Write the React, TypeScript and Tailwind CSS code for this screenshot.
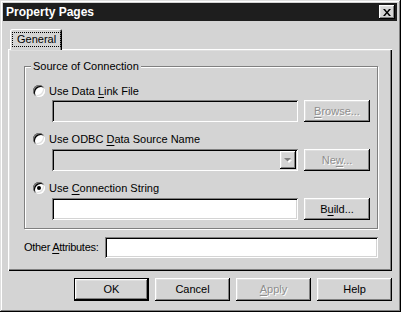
import React from "react";

const raised =
  "shadow-[inset_-1px_-1px_0_#000,inset_1px_1px_0_#fff,inset_-2px_-2px_0_#808080,inset_2px_2px_0_#dfdfdf]";
const sunken =
  "shadow-[inset_1px_1px_0_#808080,inset_-1px_-1px_0_#fff,inset_2px_2px_0_#000,inset_-2px_-2px_0_#d4d4d4]";

function U({ children }: { children: React.ReactNode }) {
  return <span className="underline underline-offset-[2px] decoration-1">{children}</span>;
}

function Radio({ checked, children }: { checked?: boolean; children: React.ReactNode }) {
  return (
    <div className="flex items-center h-[16px] gap-[4px]">
      <div className="w-[12px] h-[12px] rounded-full bg-white flex items-center justify-center shadow-[inset_1px_1px_0_#808080,inset_-1px_-1px_0_#fff,inset_2px_2px_0_#000,inset_-2px_-2px_0_#dfdfdf]">
        {checked && <div className="w-[4px] h-[4px] rounded-full bg-black" />}
      </div>
      <span>{children}</span>
    </div>
  );
}

function Button({
  children,
  disabled,
  isDefault,
  className = "",
}: {
  children: React.ReactNode;
  disabled?: boolean;
  isDefault?: boolean;
  className?: string;
}) {
  return (
    <div
      className={`${className} flex items-center justify-center bg-[#d4d4d4] ${
        isDefault ? "border border-black" : ""
      } ${raised} ${disabled ? "text-[#8e8e8e] [text-shadow:1px_1px_0_#fff]" : "text-black"}`}
    >
      {children}
    </div>
  );
}

export default function App() {
  return (
    <div className="w-[401px] h-[312px] overflow-hidden bg-[#d4d4d4] text-black text-[11px] leading-[13px] font-['Liberation_Sans',Arial,sans-serif] shadow-[inset_-1px_-1px_0_#000,inset_1px_1px_0_#dfdfdf,inset_-2px_-2px_0_#808080,inset_2px_2px_0_#fff]">
      {/* title bar */}
      <div className="ml-[3px] mr-[4px] pt-[3px]">
        <div className="h-[18px] bg-[#1e1e1e] flex items-center justify-between pl-[3px] pr-[2px]">
          <span className="text-white font-bold text-[12px]">Property Pages</span>
          <div className={`w-[16px] h-[14px] bg-[#d4d4d4] ${raised} flex items-center justify-center`}>
            <svg width="8" height="7" viewBox="0 0 8 7">
              <path d="M0 0h2l2 2.5L6 0h2L5 3.5 8 7H6L4 4.5 2 7H0l3-3.5z" fill="#000" />
            </svg>
          </div>
        </div>
      </div>

      <div className="pl-[8px] pt-[8px]">
        {/* tab */}
        <div className="relative z-10 ml-[2px] w-[52px] h-[21px] -mb-[1px] bg-[#d4d4d4] rounded-t-[2px] shadow-[inset_1px_1px_0_#fff,inset_-1px_0_0_#000,inset_-2px_0_0_#808080] flex items-start pt-[3px] pl-[2px]">
          <span className="border border-dotted border-black px-[4px] leading-[13px]">General</span>
        </div>

        {/* panel */}
        <div className="w-[384px] h-[222px] pt-[11px] pl-[16px] pr-[14px] shadow-[inset_1px_1px_0_#fff,inset_-1px_-1px_0_#000,inset_-2px_-2px_0_#808080,inset_2px_2px_0_#dfdfdf]">
          <fieldset className="border border-[#808080] shadow-[inset_1px_1px_0_#fff,1px_1px_0_#fff] pl-[8px] pr-[7px] pb-[8px]">
            <legend className="-ml-[2px] px-[2px] bg-[#d4d4d4] leading-[13px]">Source of Connection</legend>

            <div className="mt-[10px]">
              <Radio>
                Use Data <U>L</U>ink File
              </Radio>
            </div>
            <div className="flex gap-[6px] pl-[19px] mt-[1px]">
              <div className={`w-[246px] h-[22px] bg-[#d4d4d4] ${sunken}`} />
              <Button disabled className="w-[66px] h-[22px]">
                <span>
                  <U>B</U>rowse...
                </span>
              </Button>
            </div>

            <div className="mt-[9px]">
              <Radio>
                Use ODBC <U>D</U>ata Source Name
              </Radio>
            </div>
            <div className="flex gap-[6px] pl-[19px] mt-[2px]">
              <div className={`w-[246px] h-[22px] bg-[#d4d4d4] ${sunken} flex justify-end p-[2px]`}>
                <div className={`w-[16px] h-[18px] bg-[#d4d4d4] ${raised} flex items-center justify-center`}>
                  <svg width="8" height="5" viewBox="0 0 8 5">
                    <path d="M1 1h6L4 4z" fill="#fff" transform="translate(1 1)" />
                    <path d="M0 0h7L3.5 3.5z" fill="#808080" />
                  </svg>
                </div>
              </div>
              <Button disabled className="w-[66px] h-[22px]">
                <span>
                  Ne<U>w</U>...
                </span>
              </Button>
            </div>

            <div className="mt-[9px]">
              <Radio checked>
                Use <U>C</U>onnection String
              </Radio>
            </div>
            <div className="flex gap-[6px] pl-[19px] mt-[2px]">
              <div className={`w-[246px] h-[22px] bg-white ${sunken}`} />
              <Button className="w-[66px] h-[22px]">
                <span>
                  B<U>u</U>ild...
                </span>
              </Button>
            </div>
          </fieldset>

          <div className="flex items-center mt-[8px]">
            <span className="w-[81px] shrink-0 whitespace-nowrap tracking-[-0.3px]">
              Other <U>A</U>ttributes:
            </span>
            <div className={`flex-1 h-[21px] bg-white ${sunken}`} />
          </div>
        </div>

        {/* buttons */}
        <div className="w-[384px] flex justify-end gap-[6px] mt-[7px]">
          <Button isDefault className="w-[75px] h-[23px]">
            OK
          </Button>
          <Button className="w-[75px] h-[23px]">Cancel</Button>
          <Button disabled className="w-[75px] h-[23px]">
            <span>
              <U>A</U>pply
            </span>
          </Button>
          <Button className="w-[75px] h-[23px]">Help</Button>
        </div>
      </div>
    </div>
  );
}
